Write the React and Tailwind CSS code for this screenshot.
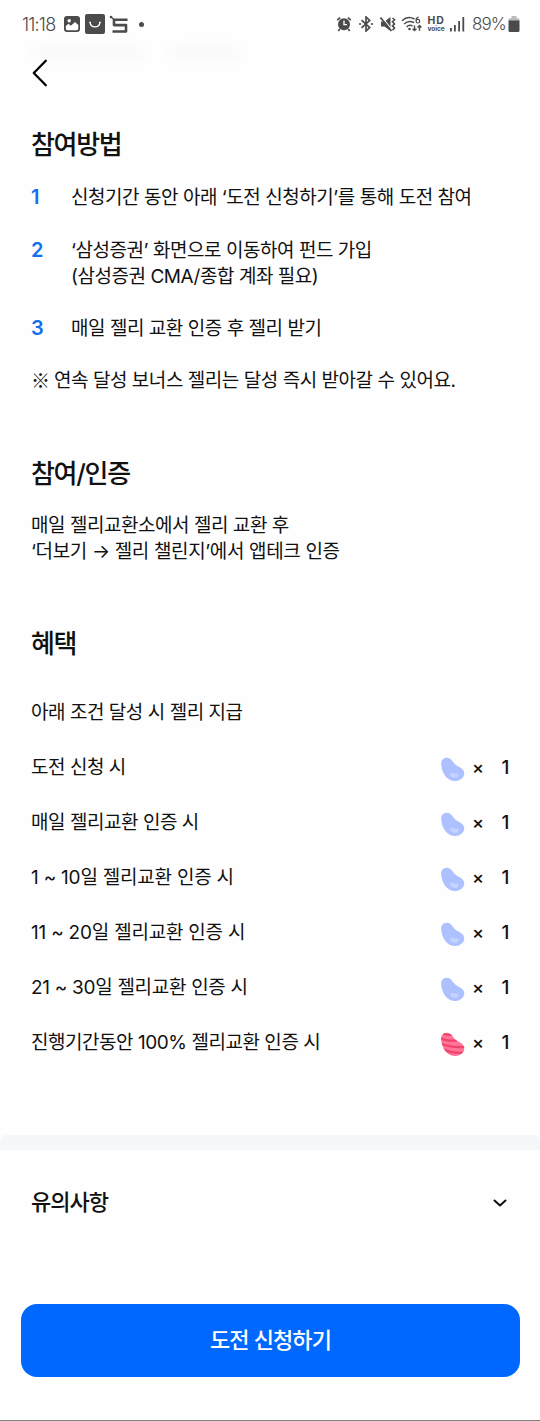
const STEPS = [
  { no: "1", lines: ["신청기간 동안 아래 ‘도전 신청하기’를 통해 도전 참여"] },
  { no: "2", lines: ["‘삼성증권’ 화면으로 이동하여 펀드 가입", "(삼성증권 CMA/종합 계좌 필요)"] },
  { no: "3", lines: ["매일 젤리 교환 인증 후 젤리 받기"] },
];

const REWARDS = [
  { label: "도전 신청 시", count: 1 },
  { label: "매일 젤리교환 인증 시", count: 1 },
  { label: "1 ~ 10일 젤리교환 인증 시", count: 1, cls: "tracking-[-0.22px]" },
  { label: "11 ~ 20일 젤리교환 인증 시", count: 1, cls: "tracking-[-0.22px]" },
  { label: "21 ~ 30일 젤리교환 인증 시", count: 1, cls: "tracking-[-0.3px]" },
  { label: "진행기간동안 100% 젤리교환 인증 시", count: 1, special: true },
];

const BEAN = "M1.2 7.4C.8 3.500 3.200.7 6.700.7c2.700 0 4.300 1.400 6.200 4 2 2.700 3.600 3.900 6.400 5.300 3.600 1.800 5.500 4.300 4.900 7.300-.8 4-4.400 6.600-8.700 6.700C7.500 24.200 1.900 16.700 1.200 7.400z";

const Jelly = ({ special }) => (
  <svg className="mt-[3px] h-[25px] w-[25px]" viewBox="0 0 25 25">
    {special ? (
      <>
        <clipPath id="bean"><path d={BEAN} /></clipPath>
        <path d={BEAN} fill="#ff7598" />
        <g clipPath="url(#bean)" fill="none" stroke="#f4426f" strokeWidth="2.200">
          <path d="M3 1.200c2 1.500 5 2 9 1.600" />
          <path d="M0 6c4 2.200 9 3 17 2.600" />
          <path d="M0 11c6 3.600 14 4.600 25 4" />
          <path d="M2 16.700c6 3.400 12 4.600 22 4" />
        </g>
      </>
    ) : (
      <>
        <path d={BEAN} fill="#adc0ff" />
        <path d="M10.800 16c1.500-.9 3 .6 5 .5 1.700-.1 3 .5 2.800 2.100-.2 1.900-2.200 2.600-4.400 2.300-3-.4-5.300-3.800-3.400-4.900z" fill="#c5d2ff" />
      </>
    )}
  </svg>
);

const StatusBar = () => (
  <div className="flex h-12 items-center pl-[22px] pr-[20px] text-[#4b4b4b]">
    <span className="w-[36px] whitespace-nowrap text-[18px] font-light tracking-[-0.8px]">11:18</span>
    <svg className="ml-[6px] h-4 w-4 shrink-0" viewBox="0 0 16 16">
      <rect width="16" height="16" rx="3" fill="currentColor" />
      <circle cx="5.200" cy="4.800" r="1.700" fill="#fff" />
      <path d="M1.800 12.500V10l2.700-2.300 2.300 2L11 6l3.300 3v3.500q0 1.700-1.700 1.700H3.500q-1.700 0-1.700-1.700z" fill="#fff" />
    </svg>
    <svg className="ml-[5px] h-5 w-5 shrink-0" viewBox="0 0 20 20">
      <rect width="20" height="20" rx="2" fill="currentColor" />
      <path d="M5 8.300c.8 6 9.200 6 10 0" fill="none" stroke="#fff" strokeWidth="1.300" strokeLinecap="round" />
      <path d="M4.400 8.300h1.400M14.200 8.300h1.400" stroke="#fff" strokeWidth="1.200" />
    </svg>
    <svg className="ml-[4px] h-[19px] w-[20px] shrink-0" viewBox="0 0 20 19" fill="none" stroke="currentColor">
      <path d="M18.500 4.700H5v5.400h12V16.500H3.500" strokeWidth="2.600" strokeLinejoin="round" />
      <path d="M1.500 1.500l4 3.500" strokeWidth="1.400" />
      <circle cx="2" cy="2" r="1.300" fill="currentColor" stroke="none" />
    </svg>
    <span className="ml-[10px] h-[5px] w-[5px] rounded-full bg-[#4b4b4b]" />

    <div className="ml-auto flex items-center">
      {/* alarm */}
      <svg className="h-4 w-4" viewBox="0 0 16 16">
        <circle cx="8" cy="8.300" r="6" fill="currentColor" />
        <path d="M1.200 4.200l3-2.500M14.800 4.200l-3-2.500M3.800 13l-1.500 2M12.200 13l1.500 2" stroke="currentColor" strokeWidth="1.700" />
        <path d="M8 4.800v3.800h3" fill="none" stroke="#fff" strokeWidth="1.400" />
      </svg>
      {/* bluetooth */}
      <svg className="ml-[6px] h-4 w-4" viewBox="0 0 16 16" fill="none" stroke="currentColor" strokeWidth="1.700">
        <path d="M3.500 4.200l8.200 7.300L8 15V1l3.700 3.500-8.200 7.300" />
        <path d="M1 8h2.200M12.800 8H15" />
      </svg>
      {/* muted */}
      <svg className="ml-[6px] h-4 w-4" viewBox="0 0 16 16">
        <path d="M1 5.500h3.500L10.500 1v14l-6-4.500H1z" fill="currentColor" />
        <path d="M1.700.6l11 14" stroke="#fff" strokeWidth="1.100" />
        <path d="M.5 1.500l11 13.500" stroke="currentColor" strokeWidth="1.600" />
        <path d="M12.500 2l2 1.700-2 2 2 2.200-2 2 2 2.100-2 2.200" fill="none" stroke="currentColor" strokeWidth="1.600" />
      </svg>
      {/* wifi 6 */}
      <svg className="ml-[5px] h-4 w-[22px]" viewBox="0 0 22 16" fill="none" stroke="currentColor" strokeWidth="1.500">
        <path d="M1 4.700C4.500 1.400 9.500.8 13.500 3M3.200 8c2.600-2.500 6.500-3.200 10-1.300M5.600 10.900c1.500-1.600 4-2 6-1" />
        <circle cx="8.500" cy="13" r="1.300" fill="currentColor" stroke="none" />
        <path d="M17.500 1.200c-1.500.4-2.500 1.600-2.500 3.400" strokeWidth="1.200" />
        <circle cx="16.900" cy="5.200" r="1.800" strokeWidth="1.200" />
        <path d="M13.500 9.500v5M11.600 12.700l1.900 1.900 1.900-1.900M18.500 14.800V9.700M16.600 11.500l1.900-1.900 1.900 1.900" strokeWidth="1.400" />
      </svg>
      <div className="ml-[4px] flex w-[18px] flex-col items-center pt-px">
        <span className="text-[10.500px] font-bold leading-[9px] tracking-[0.8px]">HD</span>
        <span className="text-[6.500px] font-bold leading-[8px]">voice</span>
      </div>
      {/* signal */}
      <svg className="ml-[5px] h-4 w-[15px]" viewBox="0 0 15 16" fill="currentColor">
        <rect x="0" y="12" width="1.800" height="3.500" />
        <rect x="4" y="9" width="1.800" height="6.500" />
        <rect x="8.200" y="5" width="1.800" height="10.500" />
        <rect x="12.400" y="1" width="1.800" height="14.500" />
      </svg>
      <span className="ml-[7px] w-[34px] whitespace-nowrap pt-px text-[17px] font-light tracking-[-0.9px]">89%</span>
      <svg className="ml-[2px] h-[18px] w-[12px]" viewBox="0 0 12 18">
        <path d="M3.500 1h5v2q3 0 3 2v1H.5V5q0-2 3-2z" fill="#bcbcbc" />
        <path d="M.5 5.500h11v10q0 1.500-1.500 1.500H2q-1.500 0-1.500-1.500z" fill="currentColor" />
      </svg>
    </div>
  </div>
);

const Heading = ({ children, className = "" }) => (
  <h2 className={`text-[26px] font-medium leading-9 tracking-[-1.3px] ${className}`}>{children}</h2>
);

export default function App() {
  return (
    <div className="relative flex h-[1421px] w-[540px] flex-col overflow-hidden border-b border-[#808080] bg-[#fefefe] font-['Inter','Noto_Sans_CJK_KR',sans-serif] text-[#111]">
      {/* content scrolled under the header */}
      <div className="absolute left-8 top-[45px] flex gap-5 opacity-[0.014] blur-[7px]">
        <span className="h-4 w-[116px] bg-black" />
        <span className="h-4 w-[76px] bg-black" />
      </div>

      <StatusBar />

      <header className="flex h-[50px] items-center pl-[32px]">
        <svg className="h-7 w-4" viewBox="0 0 16 28" fill="none" stroke="#000" strokeWidth="2.300" strokeLinecap="round" strokeLinejoin="round">
          <path d="M13.800 1.800L1.800 14l12 12.200" />
        </svg>
      </header>

      <main className="px-[31px] pt-[29px] text-[19px] leading-[26px] tracking-[-0.46px]">
        <Heading>참여방법</Heading>
        <ol className="mt-[22px] flex flex-col gap-[26.500px]">
          {STEPS.map((s) => (
            <li key={s.no} className="flex">
              <span className="w-10 text-[20px] font-semibold leading-[25px] text-[#146fee]">{s.no}</span>
              <div>
                {s.lines.map((line) => (
                  <p key={line} className="whitespace-nowrap">{line}</p>
                ))}
              </div>
            </li>
          ))}
        </ol>
        <p className="mt-[26px] flex whitespace-nowrap">
          <span className="w-[23px] font-['Noto_Sans_CJK_KR',sans-serif] leading-[24px]">※</span>
          연속 달성 보너스 젤리는 달성 즉시 받아갈 수 있어요.
        </p>

        <Heading className="mt-[62px]">참여/인증</Heading>
        <div className="mt-[21px] whitespace-nowrap">
          <p>매일 젤리교환소에서 젤리 교환 후</p>
          <p className="tracking-[-0.36px]">‘더보기 → 젤리 챌린지’에서 앱테크 인증</p>
        </div>

        <Heading className="mt-[61px]">혜택</Heading>
        <p className="mt-[37.500px]">아래 조건 달성 시 젤리 지급</p>
        <ul>
          {REWARDS.map((r) => (
            <li key={r.label} className="mt-[29.100px] flex h-[26px] items-center">
              <span className={r.cls}>{r.label}</span>
              <div className="ml-auto flex items-center font-medium">
                <Jelly special={r.special} />
                <span className="ml-[7px] w-[13px] text-[18px]">×</span>
                <span className="w-[24px] text-right">{r.count}</span>
              </div>
            </li>
          ))}
        </ul>
      </main>

      <div className="mt-[79px] h-[15px] shrink-0 rounded-t-md bg-[#f6f7f9]" />

      <section className="flex h-[105px] shrink-0 items-center justify-between pl-[31px] pr-8">
        <h3 className="text-[22px] font-medium tracking-[-1px]">유의사항</h3>
        <svg className="h-4 w-4" viewBox="0 0 16 16" fill="none" stroke="#111" strokeWidth="2" strokeLinecap="round" strokeLinejoin="round">
          <path d="M2.500 5.500l5.500 5 5.500-5" />
        </svg>
      </section>

      <button className="mx-5 mb-[43px] ml-[21px] mt-auto flex h-[73px] shrink-0 items-center justify-center rounded-2xl bg-[#0068ff] text-[22px] font-medium tracking-[-0.9px] text-white">
        도전 신청하기
      </button>
    </div>
  );
}
